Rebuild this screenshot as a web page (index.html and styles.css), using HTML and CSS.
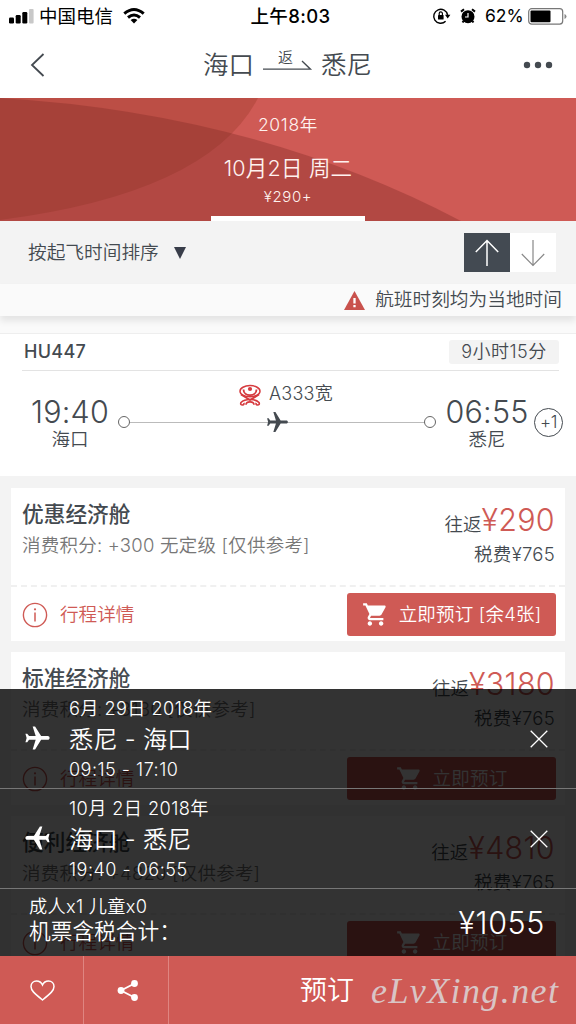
FILE: index.html
```html
<!DOCTYPE html>
<html lang="zh-CN">
<head>
<meta charset="utf-8">
<title>航班预订</title>
<link rel="stylesheet" href="styles.css">
</head>
<body>
<svg class="defs" width="0" height="0">
  <symbol id="plane" viewBox="0 0 24 24"><path transform="rotate(90 12 12)" d="M21 16v-2l-8-5V3.500c0-.83-.67-1.500-1.500-1.500S10 2.670 10 3.500V9l-8 5v2l8-2.500V19l-2 1.500V22l3.500-1 3.500 1v-1.500L13 19v-5.500l8 2.500z"/></symbol>
  <symbol id="cart" viewBox="0 0 24 24"><path d="M7 18c-1.100 0-1.990.9-1.990 2S5.900 22 7 22s2-.9 2-2-.9-2-2-2zM1 2v2h2l3.600 7.590-1.350 2.450c-.16.28-.25.61-.25.96 0 1.100.9 2 2 2h12v-2H7.420c-.14 0-.25-.11-.25-.25l.03-.12.9-1.630h7.450c.75 0 1.410-.41 1.790-1.030l3.580-6.490c.08-.14.12-.31.12-.48 0-.55-.45-1-1-1H5.210l-.94-2H1zm16 16c-1.100 0-1.990.9-1.990 2s.89 2 1.990 2 2-.9 2-2-.9-2-2-2z"/></symbol>
  <symbol id="info" viewBox="0 0 26 26"><circle cx="13" cy="13" r="11.600" fill="none" stroke="currentColor" stroke-width="1.400"/><path d="M13 10.500v9" stroke="currentColor" stroke-width="1.500"/><circle cx="13" cy="7.300" r="1.100" fill="currentColor"/></symbol>
  <symbol id="close" viewBox="0 0 18 18"><path d="M.7.7l16.600 16.600M17.300.7L.7 17.300" stroke="#fff" stroke-width="1.300"/></symbol>
</svg>
<div class="phone">
  <header class="status">
    <div class="status-left">
      <svg width="25" height="15" viewBox="0 0 25 15"><rect x="0" y="8.500" width="5" height="6" rx="1.200"/><rect x="6.700" y="6" width="5" height="8.500" rx="1.200"/><rect x="13.300" y="3" width="5" height="11.500" rx="1.200"/><rect x="20" y="0" width="4.600" height="14.500" rx="1" fill="#c8c8c8"/></svg>
      <span class="carrier">中国电信</span>
      <svg width="22" height="16" viewBox="0 0 22 16"><g fill="none" stroke="#000" stroke-width="3"><path d="M1.300 5.700Q11-2.700 20.700 5.700"/><path d="M5 9.500Q11 4.500 17 9.500"/></g><path d="M7.600 12Q11 9.300 14.400 12L11 15.500z"/></svg>
    </div>
    <span class="clock">上午8:03</span>
    <div class="status-right">
      <svg width="18" height="16" viewBox="0 0 18 16"><path d="M14.600 7A7 7 0 1 0 12.600 13.300" fill="none" stroke="#000" stroke-width="1.400"/><path d="M12 6.800h5.400l-2.700 3.700z"/><rect x="5" y="7" width="5.600" height="4.600" rx=".6"/><path d="M6.200 7V5.500a1.600 1.600 0 0 1 3.200 0V7" fill="none" stroke="#000" stroke-width="1.200"/></svg>
      <svg class="alarm" width="16" height="16" viewBox="0 0 16 16"><circle cx="8" cy="8.700" r="6.500"/><path d="M1 3.600L4 1.200M15 3.600L12 1.200M3.500 13L2.600 14.600M12.500 13l.9 1.600" stroke="#000" stroke-width="2"/><path d="M8 5v4H5" fill="none" stroke="#fff" stroke-width="1.200"/></svg>
      <span class="percent">62%</span>
      <svg width="39" height="17" viewBox="0 0 39 17"><rect x=".7" y=".7" width="34" height="15.400" rx="3" fill="none" stroke="#777" stroke-width="1.200"/><rect x="2.500" y="2.500" width="20" height="11.800" rx="1"/><path d="M36.500 6v5q2-.8 2-2.500t-2-2.500z" fill="#888"/></svg>
    </div>
  </header>
  <nav class="nav">
    <svg class="back" width="15" height="24" viewBox="0 0 15 24"><path d="M13.500 1L2 12l11.500 11" fill="none" stroke="#444a50" stroke-width="1.800"/></svg>
    <div class="route">
      <span>海口</span>
      <div class="return"><span>返</span><svg width="49" height="10" viewBox="0 0 49 10"><path d="M0 9.200h47.500L39 1" fill="none" stroke="#444a50" stroke-width="1.300"/></svg></div>
      <span>悉尼</span>
    </div>
    <svg class="more" width="30" height="8" viewBox="0 0 30 8" fill="#444a50"><circle cx="4" cy="4" r="3.200"/><circle cx="15" cy="4" r="3.200"/><circle cx="26" cy="4" r="3.200"/></svg>
  </nav>
  <section class="hero">
    <svg class="hero-art" width="576" height="123" viewBox="0 0 576 123"><path d="M0 0H258Q209 95 0 122z" fill="#a33d30" opacity=".42"/><path d="M0 0Q255 15 461 123H0z" fill="#832c27" opacity=".38"/></svg>
    <div class="date-tab">
      <span class="year">2018年</span>
      <span class="day">10月2日 周二</span>
      <span class="fare">¥290+</span>
    </div>
  </section>
  <section class="sort">
    <span class="sort-label">按起飞时间排序</span><i class="caret"></i>
    <div class="toggle">
      <span class="up"><svg width="24" height="28" viewBox="0 0 24 28"><path d="M12 27V1M.8 13L12 1.500 23.200 13" fill="none" stroke="#fff" stroke-width="1.500"/></svg></span>
      <span class="down"><svg width="24" height="28" viewBox="0 0 24 28"><path d="M12 1v26M.8 15L12 26.500 23.200 15" fill="none" stroke="#888" stroke-width="1.200"/></svg></span>
    </div>
  </section>
  <section class="notice">
    <svg width="21" height="19" viewBox="0 0 21 19"><path d="M10.500 0L21 19H0z" fill="#c9524d"/><path d="M10.500 7v5.500M10.500 14v2.300" stroke="#fff" stroke-width="2.300"/></svg>
    <span>航班时刻均为当地时间</span>
  </section>
  <section class="flight">
    <div class="flight-head"><b>HU447</b><span class="duration">9小时15分</span></div>
    <div class="flight-body">
      <div class="stop"><strong>19:40</strong><span>海口</span></div>
      <div class="track">
        <div class="craft">
          <svg width="22" height="21" viewBox="0 0 22 21" fill="none" stroke="#d63a3e"><ellipse cx="11" cy="6.200" rx="10" ry="5.600" stroke-width="1.500"/><path d="M4.500 4.500C4.500 12 17.500 12 17.500 4.500M2 9.500l9 5.500 9-5.500" stroke-width="1.900"/><circle cx="11" cy="4" r="2.100" fill="#d63a3e" stroke="none"/><path d="M11 14.500Q5 14.500 2 17.500q-1 2.500 1.500 2.500 2-.5 1.200-2M11 14.500q6 0 9 3 1 2.500-1.500 2.500-2-.5-1.200-2M7 19.800q0-3 4-3t4 3" stroke-width="1.700"/></svg>
          <span>A333宽</span>
        </div>
        <div class="line"><i></i><svg class="mid-plane" width="25" height="25"><use href="#plane"/></svg><i></i></div>
      </div>
      <div class="stop arrive"><strong>06:55</strong><span>悉尼</span></div>
      <span class="plus">+1</span>
    </div>
  </section>
  <main class="cards">
    <article class="card">
      <div class="info">
        <div class="cabin"><h2>优惠经济舱</h2><p>消费积分: +300 无定级 [仅供参考]</p></div>
        <div class="price"><div>往返<em>¥290</em></div><p>税费¥765</p></div>
      </div>
      <div class="actions"><a class="detail"><svg width="26" height="26"><use href="#info"/></svg>行程详情</a><a class="book"><svg width="27" height="27"><use href="#cart"/></svg>立即预订 [余4张]</a></div>
    </article>
    <article class="card">
      <div class="info">
        <div class="cabin"><h2>标准经济舱</h2><p>消费积分: +3180 [仅供参考]</p></div>
        <div class="price"><div>往返<em>¥3180</em></div><p>税费¥765</p></div>
      </div>
      <div class="actions"><a class="detail"><svg width="26" height="26"><use href="#info"/></svg>行程详情</a><a class="book"><svg width="27" height="27"><use href="#cart"/></svg>立即预订</a></div>
    </article>
    <article class="card">
      <div class="info">
        <div class="cabin"><h2>便利经济舱</h2><p>消费积分: +4820 [仅供参考]</p></div>
        <div class="price"><div>往返<em>¥4810</em></div><p>税费¥765</p></div>
      </div>
      <div class="actions"><a class="detail"><svg width="26" height="26"><use href="#info"/></svg>行程详情</a><a class="book"><svg width="27" height="27"><use href="#cart"/></svg>立即预订</a></div>
    </article>
  </main>
  <div class="sheet">
    <div class="summary">
      <div class="leg">
        <svg class="leg-plane" width="29" height="29"><use href="#plane"/></svg>
        <div class="leg-text"><span class="leg-date">6月 29日 2018年</span><span class="leg-route">悉尼 - 海口</span><span class="leg-time">09:15 - 17:10</span></div>
        <svg width="18" height="18"><use href="#close"/></svg>
      </div>
      <div class="leg">
        <svg class="leg-plane back-leg" width="29" height="29"><use href="#plane"/></svg>
        <div class="leg-text"><span class="leg-date">10月 2日 2018年</span><span class="leg-route">海口 - 悉尼</span><span class="leg-time">19:40 - 06:55</span></div>
        <svg width="18" height="18"><use href="#close"/></svg>
      </div>
      <div class="total"><div><span class="pax">成人x1 儿童x0</span><span class="sum-label">机票含税合计：</span></div><span class="sum">¥1055</span></div>
    </div>
    <footer class="footer">
      <div class="tool"><svg width="25" height="21" viewBox="0 0 25 21"><path d="M12.500 20C4 13 1 10.500 1 6.500 1 3 3.500 1 6.500 1c2.700 0 4.800 1.300 6 4 1.200-2.700 3.300-4 6-4 3 0 5.500 2 5.500 5.500 0 4-3 6.500-11.500 13.500z" fill="none" stroke="#fff" stroke-width="1.500"/></svg></div>
      <div class="tool share"><svg width="22" height="21" viewBox="0 0 22 21"><path d="M17.500 3.500L4 10.500l13.500 7" fill="none" stroke="#fff" stroke-width="1.800"/><g fill="#fff"><circle cx="17.500" cy="3.500" r="3.400"/><circle cx="4" cy="10.500" r="3.400"/><circle cx="17.500" cy="17.500" r="3.400"/></g></svg></div>
      <div class="reserve">预订</div>
      <span class="mark">eLvXing.net</span>
    </footer>
  </div>
</div>
</body>
</html>
```
FILE: styles.css
```css
* { box-sizing: border-box; }
body { margin: 0; font-family: Inter, "Noto Sans CJK SC", sans-serif; font-weight: 350; color: #444a50; background: #f3f3f3; }
.defs { position: absolute; }
svg { display: block; flex: none; overflow: visible; }
h2, p { margin: 0; }
.phone { position: relative; width: 576px; height: 1024px; overflow: hidden; background: #f3f3f3; white-space: nowrap; }

.status { display: grid; grid-template-columns: 1fr auto 1fr; align-items: center; height: 32px; padding: 0 9px; background: #fff; color: #000; font-weight: 400; }
.status-left { display: flex; align-items: center; gap: 5px; }
.carrier { width: 79px; font-size: 18.5px; line-height: 32px; }
.clock { font-size: 18.5px; font-weight: 500; letter-spacing: .4px; line-height: 32px; padding-left: 5px; }
.status-right { display: flex; align-items: center; justify-content: flex-end; }
.alarm { margin: 0 9px 0 9px; }
.percent { width: 43px; font-size: 17.5px; line-height: 32px; }

.nav { display: grid; grid-template-columns: 1fr auto 1fr; align-items: center; height: 66px; padding: 0 23px 0 30px; background: #fff; }
.route { display: flex; align-items: center; gap: 9px; margin-left: -8px; font-size: 25.5px; line-height: 66px; }
.return { display: flex; flex-direction: column; align-items: center; height: 40px; padding-top: 4px; font-size: 15px; line-height: 17px; }
.return span { margin-right: 4px; }
.return svg { margin-top: -6px; }
.more { justify-self: end; }

.hero { position: relative; display: flex; justify-content: center; height: 123px; background: #cf5a55; color: #fff2ef; }
.hero-art { position: absolute; inset: 0; }
.date-tab { position: relative; display: flex; flex-direction: column; align-items: center; width: 154px; height: 123px; padding-top: 15px; border-bottom: 5px solid #fff; }
.year { font-size: 17.5px; line-height: 24px; letter-spacing: .7px; }
.day { margin-top: 15px; font-size: 21.5px; line-height: 32px; letter-spacing: .2px; }
.fare { margin-top: 3px; font-size: 15px; line-height: 20px; letter-spacing: .6px; }

.sort { display: flex; align-items: center; height: 63px; padding: 0 20px 0 28px; }
.sort-label { font-size: 18.7px; line-height: 30px; }
.caret { margin-left: 15px; border: 6px solid transparent; border-width: 12px 6px 0; border-top-color: #383d49; }
.toggle { display: flex; margin-left: auto; }
.toggle span { display: flex; align-items: center; justify-content: center; width: 46px; height: 39px; }
.up { background: #434a52; }
.down { background: #fff; }

.notice { position: relative; display: flex; align-items: center; justify-content: flex-end; gap: 10px; height: 32px; padding-right: 14px; background: #fafafa; box-shadow: 0 5px 7px rgba(0,0,0,.09); font-size: 18.7px; line-height: 34px; }

.flight { height: 160px; border-top: 17px solid #fafafa; background: #fff; box-shadow: inset 0 1px #eee; }
.flight-head { display: flex; justify-content: space-between; align-items: center; height: 38px; margin: 0 17px 0 22px; padding-left: 2px; border-bottom: 1px solid #e3e3e3; }
.flight-head b { font-size: 18px; line-height: 24px; font-weight: 500; letter-spacing: .3px; }
.duration { width: 110px; height: 24px; border-radius: 3px; background: #f3f3f3; font-size: 18px; line-height: 24px; letter-spacing: .5px; text-align: center; }
.flight-body { display: flex; align-items: flex-start; padding: 22px 12px 0 30px; }
.stop { display: flex; flex-direction: column; align-items: center; width: 80px; }
.stop strong { font-size: 30.5px; line-height: 37px; font-weight: 350; letter-spacing: .2px; }
.stop span { font-size: 18.5px; line-height: 18px; }
.arrive { width: 84px; }
.track { width: 318px; margin: -11px 9px 0 8px; }
.craft { display: flex; align-items: center; gap: 8px; height: 27px; padding-left: 121px; font-size: 18px; letter-spacing: .2px; line-height: 24px; }
.craft span { margin-top: -3px; }
.line { display: flex; align-items: center; justify-content: space-between; height: 26px; background: linear-gradient(#bbb, #bbb) center / 296px 1px no-repeat; }
.line i { width: 12px; height: 12px; border: 1.4px solid #666; border-radius: 50%; }
.mid-plane { fill: #444a50; }
.plus { flex: none; width: 29px; height: 29px; margin: 15px 0 0 5px; border: 1.5px solid #444a50; border-radius: 50%; font-size: 17px; line-height: 26px; text-align: center; letter-spacing: -.3px; }

.cards { display: flex; flex-direction: column; gap: 11px; padding: 12px 11px 0; }
.card { height: 153px; flex: none; background: #fff; }
.info { display: flex; justify-content: space-between; height: 99px; padding: 11px 10px 0 11px; border-bottom: 2px dashed #f0f0f0; }
.cabin h2 { font-size: 21.7px; line-height: 30px; font-weight: 500; }
.cabin p { font-size: 18.5px; line-height: 32px; letter-spacing: .22px; color: #777; }
.price { text-align: right; font-size: 18.5px; }
.price div { height: 41px; line-height: 41px; }
.price em { font-size: 30.5px; font-style: normal; letter-spacing: .3px; color: #cf5a55; }
.price p { line-height: 29px; letter-spacing: .3px; }
.actions { display: flex; justify-content: space-between; padding: 6px 9px 0 11px; }
.detail { display: flex; align-items: center; gap: 12px; height: 43px; font-size: 18.6px; color: #cf5a55; }
.detail, .book { line-height: 41px; }
.book { display: flex; align-items: center; justify-content: center; gap: 10px; width: 209px; height: 43px; border-radius: 3px; background: #cf5a55; color: #fff; font-size: 18.5px; letter-spacing: .2px; }
.book svg { fill: #fff; }

.sheet { position: absolute; left: 0; right: 0; bottom: 0; }
.summary { height: 267px; background: rgba(0,0,0,.8); color: #fff; }
.leg { display: flex; align-items: center; height: 100px; padding: 0 28px 0 23px; border-bottom: 1px solid #777; }
.leg-plane { margin-right: 17px; fill: #fff; }
.back-leg { transform: scaleX(-1); }
.leg-text { display: flex; flex: 1; flex-direction: column; }
.leg-date { font-size: 18.2px; line-height: 28px; letter-spacing: .4px; }
.leg-route { padding-top: 2px; font-size: 24.2px; line-height: 32px; letter-spacing: .2px; }
.leg-time { font-size: 18px; line-height: 27px; letter-spacing: .5px; }
.total { display: flex; justify-content: space-between; height: 67px; padding: 4px 31px 0 29px; }
.total div { display: flex; flex-direction: column; }
.pax { font-size: 18.2px; line-height: 26px; letter-spacing: .3px; }
.sum-label { font-size: 21.7px; line-height: 25px; }
.sum { font-size: 30.5px; line-height: 60px; letter-spacing: .6px; }
.footer { position: relative; display: flex; height: 68px; background: #cf5a55; color: #fff; }
.tool { display: flex; align-items: center; justify-content: center; width: 84px; padding-left: 2px; border-right: 1px solid #df8581; }
.share { width: 85px; padding-left: 4px; }
.reserve { margin-left: 131px; font-size: 27px; line-height: 70px; }
.mark { position: absolute; left: 371px; top: 8px; color: #d9c5c5; font-family: "Z003", "Liberation Serif", cursive; font-style: italic; font-weight: 400; font-size: 36px; line-height: 54px; letter-spacing: 1.4px; }
```
